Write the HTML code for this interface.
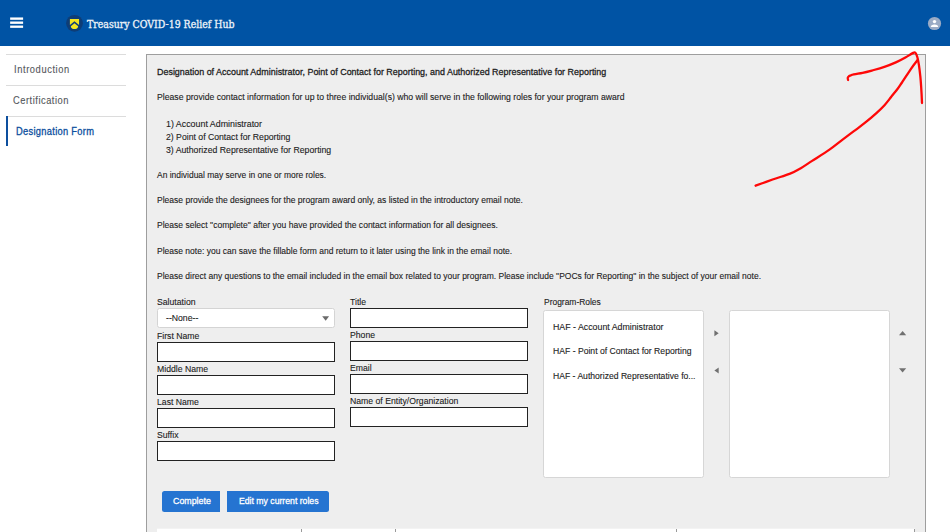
<!DOCTYPE html>
<html lang="en">
<head>
<meta charset="utf-8">
<title>Treasury COVID-19 Relief Hub</title>
<style>
html,body{margin:0;padding:0;}
body{width:950px;height:532px;overflow:hidden;background:#ffffff;position:relative;font-family:"Liberation Sans",sans-serif;}
.abs{position:absolute;}
.t{position:absolute;white-space:pre;line-height:14px;height:14px;transform-origin:0 0;}
.hdr{left:0;top:0;width:950px;height:46px;background:#0053a4;}
.bar{left:10.2px;width:12.9px;height:2.3px;background:#fff;}
.sline{left:6px;width:120px;height:1px;background:#dcdcdc;}
.panel{left:146px;top:54px;width:780px;height:500px;background:#eeeeee;border:1px solid #9e9e9e;box-sizing:border-box;}
.inp{background:#fff;border:1px solid #222;box-sizing:border-box;height:20px;}
.sel{background:#fff;border:1px solid #d4d4d4;border-radius:2.5px;box-sizing:border-box;}
.lb{background:#fff;border:1px solid #d6d6d6;border-radius:2.5px;box-sizing:border-box;top:310px;height:168px;}
.btn{background:#2574d1;top:491px;height:21px;}
</style>
</head>
<body>
<div class="abs hdr"></div>
<svg class="abs" style="left:8px;top:15px" width="18" height="16" viewBox="8 15 18 16"><rect x="10.15" y="17.45" width="12.95" height="2.35" fill="#fff"/><rect x="10.15" y="21.5" width="12.95" height="2.35" fill="#fff"/><rect x="10.15" y="25.55" width="12.95" height="2.3" fill="#fff"/></svg>
<svg class="abs" style="left:64px;top:13px" width="22" height="22" viewBox="64 13 22 22">
  <circle cx="74.5" cy="23.3" r="8.4" fill="#0e3d76"/>
  <path d="M69.9 19 H79.05 V25.1 L74.45 21.3 L69.9 25.1 Z" fill="#f4e51f"/>
  <path d="M74.45 23.2 L78.2 26.3 Q78.1 28.2 76.5 28.7 Q74.45 29.3 72.4 28.7 Q70.8 28.2 70.8 26.3 Z" fill="#f4e51f"/>
</svg>
<svg class="abs" style="left:926px;top:15px" width="18" height="18" viewBox="926 15 18 18">
  <circle cx="934.5" cy="23.5" r="6.6" fill="#9aabc5"/>
  <circle cx="934.5" cy="21.6" r="1.7" fill="#ffffff"/>
  <path d="M930.8 27.1 Q930.8 24.4 934.5 24.4 Q938.2 24.4 938.2 27.1 Z" fill="#ffffff"/>
</svg>

<div class="abs sline" style="top:54px"></div>
<div class="abs sline" style="top:85px"></div>
<div class="abs sline" style="top:116px"></div>
<div class="abs" style="left:6px;top:116.3px;width:2.1px;height:30.2px;background:#0d4f9e"></div>

<div class="abs panel"></div>

<div class="abs sel" style="left:157px;top:308px;width:178px;height:20px"></div>
<svg class="abs" style="left:320px;top:314px" width="12" height="9" viewBox="320 314 12 9"><path d="M322.2 316.2 H329.1 L325.65 320.8 Z" fill="#6b6b6b"/></svg>
<div class="abs inp" style="left:157px;top:342px;width:178px"></div>
<div class="abs inp" style="left:157px;top:375px;width:178px"></div>
<div class="abs inp" style="left:157px;top:408px;width:178px"></div>
<div class="abs inp" style="left:157px;top:441px;width:178px"></div>
<div class="abs inp" style="left:350px;top:308px;width:178px"></div>
<div class="abs inp" style="left:350px;top:341px;width:178px"></div>
<div class="abs inp" style="left:350px;top:374px;width:178px"></div>
<div class="abs inp" style="left:350px;top:407px;width:178px"></div>

<div class="abs lb" style="left:543px;width:161px"></div>
<div class="abs lb" style="left:729px;width:161px"></div>
<svg class="abs" style="left:712px;top:328px" width="10" height="48" viewBox="712 328 10 48">
  <path d="M714.4 330.2 L718.7 333.2 L714.4 336.3 Z" fill="#707070"/>
  <path d="M718.7 367.4 L714.4 370.5 L718.7 373.6 Z" fill="#707070"/>
</svg>
<svg class="abs" style="left:897px;top:328px" width="12" height="48" viewBox="897 328 12 48">
  <path d="M899 335.3 L906.2 335.3 L902.6 331 Z" fill="#707070"/>
  <path d="M899 368.3 L906.2 368.3 L902.6 372.6 Z" fill="#707070"/>
</svg>

<div class="abs btn" style="left:162px;width:58.2px;border-radius:2.5px 0 0 2.5px"></div>
<div class="abs btn" style="left:227px;width:102.1px;border-radius:0 2.5px 2.5px 0"></div>

<div class="abs" style="left:156.5px;top:528px;width:758.5px;height:1px;background:#f3f3f3"></div>
<div class="abs" style="left:156.5px;top:529px;width:758.5px;height:10px;background:#fff"></div>
<div class="abs" style="left:301px;top:529px;width:1px;height:4px;background:#9a9a9a"></div>
<div class="abs" style="left:395px;top:529px;width:1px;height:4px;background:#9a9a9a"></div>
<div class="abs" style="left:676px;top:529px;width:1px;height:4px;background:#9a9a9a"></div>
<div class="abs" style="left:914px;top:529px;width:1px;height:4px;background:#9a9a9a"></div>

<div class="t" style="left:86.80px;top:17.37px;font-family:'DejaVu Serif Condensed', 'DejaVu Serif', 'Liberation Serif', serif;font-size:10.5px;font-weight:400;color:#eef3f9;transform:scaleX(0.9943);letter-spacing:0.000px;-webkit-text-stroke:0.3px #eef3f9;">Treasury COVID-19 Relief Hub</div>
<div class="t" style="left:13.50px;top:62.53px;font-family:'Liberation Sans', sans-serif;font-size:10px;font-weight:400;color:#55585c;transform:scaleX(0.9300);letter-spacing:0.645px;-webkit-text-stroke:0.12px #55585c;">Introduction</div>
<div class="t" style="left:13.40px;top:93.53px;font-family:'Liberation Sans', sans-serif;font-size:10px;font-weight:400;color:#55585c;transform:scaleX(0.9300);letter-spacing:0.569px;-webkit-text-stroke:0.12px #55585c;">Certification</div>
<div class="t" style="left:15.90px;top:124.53px;font-family:'Liberation Sans', sans-serif;font-size:10px;font-weight:400;color:#0d4f9e;transform:scaleX(0.9300);letter-spacing:0.329px;-webkit-text-stroke:0.3px #0d4f9e;">Designation Form</div>
<div class="t" style="left:157.00px;top:64.62px;font-family:'Liberation Sans', sans-serif;font-size:9.75px;font-weight:400;color:#1c1c1c;transform:scaleX(0.9160);letter-spacing:0.000px;-webkit-text-stroke:0.28px #1c1c1c;">Designation of Account Administrator, Point of Contact for Reporting, and Authorized Representative for Reporting</div>
<div class="t" style="left:157.00px;top:89.62px;font-family:'Liberation Sans', sans-serif;font-size:9.75px;font-weight:400;color:#1c1c1c;transform:scaleX(0.8884);letter-spacing:0.000px;-webkit-text-stroke:0.12px #1c1c1c;">Please provide contact information for up to three individual(s) who will serve in the following roles for your program award</div>
<div class="t" style="left:166.00px;top:116.62px;font-family:'Liberation Sans', sans-serif;font-size:9.75px;font-weight:400;color:#1c1c1c;transform:scaleX(0.9083);letter-spacing:0.000px;-webkit-text-stroke:0.12px #1c1c1c;">1) Account Administrator</div>
<div class="t" style="left:166.00px;top:129.62px;font-family:'Liberation Sans', sans-serif;font-size:9.75px;font-weight:400;color:#1c1c1c;transform:scaleX(0.8897);letter-spacing:0.000px;-webkit-text-stroke:0.12px #1c1c1c;">2) Point of Contact for Reporting</div>
<div class="t" style="left:166.00px;top:142.62px;font-family:'Liberation Sans', sans-serif;font-size:9.75px;font-weight:400;color:#1c1c1c;transform:scaleX(0.8939);letter-spacing:0.000px;-webkit-text-stroke:0.12px #1c1c1c;">3) Authorized Representative for Reporting</div>
<div class="t" style="left:157.00px;top:167.62px;font-family:'Liberation Sans', sans-serif;font-size:9.75px;font-weight:400;color:#1c1c1c;transform:scaleX(0.8673);letter-spacing:0.000px;-webkit-text-stroke:0.12px #1c1c1c;">An individual may serve in one or more roles.</div>
<div class="t" style="left:157.00px;top:192.62px;font-family:'Liberation Sans', sans-serif;font-size:9.75px;font-weight:400;color:#1c1c1c;transform:scaleX(0.8749);letter-spacing:0.000px;-webkit-text-stroke:0.12px #1c1c1c;">Please provide the designees for the program award only, as listed in the introductory email note.</div>
<div class="t" style="left:157.00px;top:217.62px;font-family:'Liberation Sans', sans-serif;font-size:9.75px;font-weight:400;color:#1c1c1c;transform:scaleX(0.8748);letter-spacing:0.000px;-webkit-text-stroke:0.12px #1c1c1c;">Please select &quot;complete&quot; after you have provided the contact information for all designees.</div>
<div class="t" style="left:157.00px;top:243.62px;font-family:'Liberation Sans', sans-serif;font-size:9.75px;font-weight:400;color:#1c1c1c;transform:scaleX(0.8724);letter-spacing:0.000px;-webkit-text-stroke:0.12px #1c1c1c;">Please note: you can save the fillable form and return to it later using the link in the email note.</div>
<div class="t" style="left:157.00px;top:268.62px;font-family:'Liberation Sans', sans-serif;font-size:9.75px;font-weight:400;color:#1c1c1c;transform:scaleX(0.8715);letter-spacing:0.000px;-webkit-text-stroke:0.12px #1c1c1c;">Please direct any questions to the email included in the email box related to your program. Please include &quot;POCs for Reporting&quot; in the subject of your email note.</div>
<div class="t" style="left:157.00px;top:294.62px;font-family:'Liberation Sans', sans-serif;font-size:9.75px;font-weight:400;color:#1c1c1c;transform:scaleX(0.8884);letter-spacing:0.000px;-webkit-text-stroke:0.12px #1c1c1c;">Salutation</div>
<div class="t" style="left:165.60px;top:310.62px;font-family:'Liberation Sans', sans-serif;font-size:9.75px;font-weight:400;color:#1c1c1c;transform:scaleX(0.8899);letter-spacing:0.000px;-webkit-text-stroke:0.12px #1c1c1c;">--None--</div>
<div class="t" style="left:157.00px;top:328.62px;font-family:'Liberation Sans', sans-serif;font-size:9.75px;font-weight:400;color:#1c1c1c;transform:scaleX(0.8884);letter-spacing:0.000px;-webkit-text-stroke:0.12px #1c1c1c;">First Name</div>
<div class="t" style="left:157.00px;top:361.62px;font-family:'Liberation Sans', sans-serif;font-size:9.75px;font-weight:400;color:#1c1c1c;transform:scaleX(0.8884);letter-spacing:0.000px;-webkit-text-stroke:0.12px #1c1c1c;">Middle Name</div>
<div class="t" style="left:157.00px;top:394.62px;font-family:'Liberation Sans', sans-serif;font-size:9.75px;font-weight:400;color:#1c1c1c;transform:scaleX(0.8884);letter-spacing:0.000px;-webkit-text-stroke:0.12px #1c1c1c;">Last Name</div>
<div class="t" style="left:157.00px;top:427.62px;font-family:'Liberation Sans', sans-serif;font-size:9.75px;font-weight:400;color:#1c1c1c;transform:scaleX(0.8884);letter-spacing:0.000px;-webkit-text-stroke:0.12px #1c1c1c;">Suffix</div>
<div class="t" style="left:350.40px;top:294.62px;font-family:'Liberation Sans', sans-serif;font-size:9.75px;font-weight:400;color:#1c1c1c;transform:scaleX(0.8884);letter-spacing:0.000px;-webkit-text-stroke:0.12px #1c1c1c;">Title</div>
<div class="t" style="left:350.40px;top:327.62px;font-family:'Liberation Sans', sans-serif;font-size:9.75px;font-weight:400;color:#1c1c1c;transform:scaleX(0.8884);letter-spacing:0.000px;-webkit-text-stroke:0.12px #1c1c1c;">Phone</div>
<div class="t" style="left:350.40px;top:360.62px;font-family:'Liberation Sans', sans-serif;font-size:9.75px;font-weight:400;color:#1c1c1c;transform:scaleX(0.8884);letter-spacing:0.000px;-webkit-text-stroke:0.12px #1c1c1c;">Email</div>
<div class="t" style="left:350.40px;top:393.62px;font-family:'Liberation Sans', sans-serif;font-size:9.75px;font-weight:400;color:#1c1c1c;transform:scaleX(0.8884);letter-spacing:0.000px;-webkit-text-stroke:0.12px #1c1c1c;">Name of Entity/Organization</div>
<div class="t" style="left:543.90px;top:294.62px;font-family:'Liberation Sans', sans-serif;font-size:9.75px;font-weight:400;color:#1c1c1c;transform:scaleX(0.8663);letter-spacing:0.000px;-webkit-text-stroke:0.12px #1c1c1c;">Program-Roles</div>
<div class="t" style="left:552.50px;top:319.62px;font-family:'Liberation Sans', sans-serif;font-size:9.75px;font-weight:400;color:#1c1c1c;transform:scaleX(0.9023);letter-spacing:0.000px;-webkit-text-stroke:0.12px #1c1c1c;">HAF - Account Administrator</div>
<div class="t" style="left:552.50px;top:343.62px;font-family:'Liberation Sans', sans-serif;font-size:9.75px;font-weight:400;color:#1c1c1c;transform:scaleX(0.8844);letter-spacing:0.000px;-webkit-text-stroke:0.12px #1c1c1c;">HAF - Point of Contact for Reporting</div>
<div class="t" style="left:552.50px;top:368.62px;font-family:'Liberation Sans', sans-serif;font-size:9.75px;font-weight:400;color:#1c1c1c;transform:scaleX(0.8824);letter-spacing:0.000px;-webkit-text-stroke:0.12px #1c1c1c;">HAF - Authorized Representative fo...</div>
<div class="t" style="left:173.00px;top:493.62px;font-family:'Liberation Sans', sans-serif;font-size:9.75px;font-weight:400;color:#ffffff;transform:scaleX(0.9081);letter-spacing:0.000px;-webkit-text-stroke:0.3px #fff;">Complete</div>
<div class="t" style="left:238.60px;top:493.62px;font-family:'Liberation Sans', sans-serif;font-size:9.75px;font-weight:400;color:#ffffff;transform:scaleX(0.8892);letter-spacing:0.000px;-webkit-text-stroke:0.3px #fff;">Edit my current roles</div>

<svg class="abs" style="left:740px;top:45px" width="200" height="150" viewBox="740 45 200 150">
  <g fill="none" stroke="#fe0808" stroke-width="2.3" stroke-linecap="round" stroke-linejoin="round">
    <path d="M755.6 185.7 C758.4 184.7 767.0 181.5 772.6 179.5 C778.2 177.5 784.8 175.8 789.5 173.9 C794.2 172.0 797.0 170.4 800.8 168.2 C804.6 166.0 807.3 164.0 812.1 160.9 C816.9 157.8 824.7 153.0 829.8 149.4 C834.9 145.8 838.6 142.6 842.6 139.6 C846.6 136.6 850.1 134.0 853.9 131.2 C857.6 128.4 861.4 125.7 865.1 122.7 C868.9 119.7 873.2 116.0 876.4 113.1 C879.6 110.2 882.1 107.8 884.5 105.2 C886.9 102.6 888.6 100.2 890.7 97.5 C892.8 94.8 895.4 91.8 897.3 89.3 C899.2 86.8 899.7 85.9 902.0 82.5 C904.3 79.1 908.4 72.6 911.0 68.8 C913.6 65.0 916.7 61.3 917.8 59.8"/>
    <path d="M848.1 80.1 C848.1 79.6 847.4 78.1 847.9 77.3 C848.4 76.5 848.8 75.8 851.3 75.1 C853.8 74.3 858.9 73.6 862.6 72.8 C866.4 72.0 870.0 71.0 873.8 70.0 C877.5 69.0 881.3 67.9 885.1 66.6 C888.9 65.3 893.0 63.6 896.4 62.1 C899.8 60.6 902.8 59.1 905.4 57.6 C908.0 56.1 910.6 54.2 912.2 53.4 C913.9 52.6 914.4 52.0 915.3 52.6 C916.1 53.2 916.7 55.0 917.3 57.0 C917.9 59.0 918.4 61.7 918.9 64.9 C919.4 68.1 919.9 72.4 920.3 76.2 C920.7 80.0 920.9 83.0 921.2 87.5 C921.5 92.0 921.9 100.4 922.0 103.0"/>
  </g>
</svg>
</body>
</html>
